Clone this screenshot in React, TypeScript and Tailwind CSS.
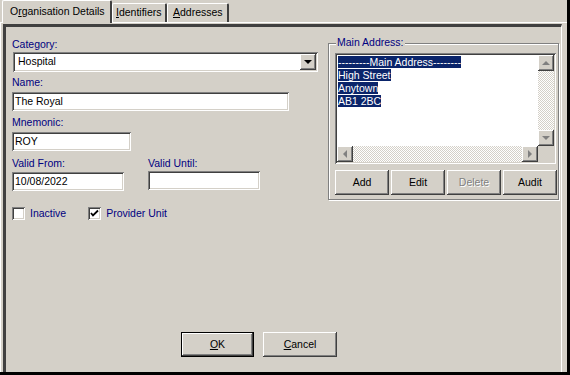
import React from "react";

const sunken =
  "bg-white shadow-[inset_1px_1px_0_#808080,inset_-1px_-1px_0_#ffffff,inset_2px_2px_0_#404040,inset_-2px_-2px_0_#d4d0c8]";
const raised =
  "bg-[#d4d0c8] shadow-[inset_-1px_-1px_0_#404040,inset_1px_1px_0_#ffffff,inset_-2px_-2px_0_#808080,inset_2px_2px_0_#d4d0c8]";
const track =
  "bg-[repeating-conic-gradient(#d4d0c8_0%_25%,#ffffff_0%_50%)] bg-[length:2px_2px]";

function Label({ children }: { children: React.ReactNode }) {
  return <div className="h-[13px] leading-[13px] text-[#000080]">{children}</div>;
}

function Arrow({ dir, color = "#808080" }: { dir: "up" | "down" | "left" | "right"; color?: string }) {
  const pts = {
    up: "4,6 8,2 12,6",
    down: "4,2 12,2 8,6",
    left: "6,4 2,8 6,12",
    right: "2,4 2,12 6,8",
  }[dir];
  const vertical = dir === "up" || dir === "down";
  return (
    <svg
      width={vertical ? 16 : 8}
      height={vertical ? 8 : 16}
      viewBox={vertical ? "0 0 16 8" : "0 0 8 16"}
      className="shrink-0"
    >
      <polygon points={pts} fill={color} />
    </svg>
  );
}

function ScrollButton({ dir }: { dir: "up" | "down" | "left" | "right" }) {
  return (
    <div className={`${raised} flex h-[16px] w-[16px] shrink-0 items-center justify-center`}>
      <Arrow dir={dir} />
    </div>
  );
}

function Checkbox({ checked, label }: { checked?: boolean; label: string }) {
  return (
    <div className="flex h-[13px] items-center">
      <div className={`${sunken} h-[13px] w-[13px] shrink-0`}>
        {checked && (
          <svg width="13" height="13" viewBox="0 0 13 13">
            <path d="M3 6 L5 8.5 L10 3.5" stroke="#000" strokeWidth="1.8" fill="none" />
          </svg>
        )}
      </div>
      <span className="ml-[5px] leading-[13px] text-[#000080]">{label}</span>
    </div>
  );
}

function Button({ children, disabled }: { children: React.ReactNode; disabled?: boolean }) {
  return (
    <div
      className={`${raised} flex h-[25px] w-[54px] items-center justify-center ${
        disabled ? "text-[#808080] [text-shadow:1px_1px_0_#ffffff]" : "text-black"
      }`}
    >
      {children}
    </div>
  );
}

export default function App() {
  return (
    <div className="box-border flex h-[375px] w-[570px] flex-col border-b-[3px] border-r-[3px] border-black bg-[#d4d0c8] font-['Liberation_Sans',Arial,sans-serif] text-[10.5px] text-black">
      {/* tabs */}
      <div className="flex h-[22px] shrink-0 items-end">
        <div className="relative z-10 -mb-[1px] ml-[2px] flex h-[23px] w-[110px] items-start rounded-t-[2px] border-l border-t border-r-2 border-l-white border-t-white border-r-[#404040] bg-[#d4d0c8] pl-[7px] pt-[4px]">
          <span className="leading-[13px]">
            O<span className="underline">r</span>ganisation Details
          </span>
        </div>
        <div className="flex h-[19px] w-[55px] items-center rounded-t-[2px] border-l border-t border-r-2 border-l-white border-t-white border-r-[#404040] pl-[3px]">
          <span>
            <span className="underline">I</span>dentifiers
          </span>
        </div>
        <div className="flex h-[19px] w-[62px] items-center rounded-t-[2px] border-l border-t border-r-2 border-l-white border-t-white border-r-[#404040] pl-[5px]">
          <span>
            <span className="underline">A</span>ddresses
          </span>
        </div>
      </div>

      {/* page */}
      <div className="flex flex-1 border-l border-t border-white">
        <div className="ml-[2px] mt-[1px] flex w-[559px] flex-col border-l-[3px] border-r border-t-[3px] border-l-[#404040] border-r-white border-t-[#404040]">
          <div className="flex items-start">
            {/* left column */}
            <div className="ml-[6px] flex w-[316px] flex-col">
              <div className="mt-[11px]">
                <Label>Category:</Label>
              </div>
              <div className={`${sunken} ml-[1px] mt-[1px] flex h-[20px] w-[305px] items-center justify-between p-[2px]`}>
                <span className="pl-[3px]">Hospital</span>
                <div className={`${raised} flex h-[16px] w-[16px] items-center justify-center`}>
                  <Arrow dir="down" color="#000000" />
                </div>
              </div>

              <div className="mt-[4px]">
                <Label>Name:</Label>
              </div>
              <div className={`${sunken} mt-[3px] flex h-[19px] w-[277px] items-center pl-[3px]`}>The Royal</div>

              <div className="mt-[5px]">
                <Label>Mnemonic:</Label>
              </div>
              <div className={`${sunken} mt-[3px] flex h-[19px] w-[119px] items-center pl-[3px]`}>ROY</div>

              <div className="mt-[6px] flex gap-[24px]">
                <div className="flex w-[112px] flex-col">
                  <Label>Valid From:</Label>
                  <div className={`${sunken} mt-[2px] flex h-[19px] w-[112px] items-center pl-[3px]`}>10/08/2022</div>
                </div>
                <div className="flex w-[112px] flex-col">
                  <Label>Valid Until:</Label>
                  <div className={`${sunken} mt-[1px] h-[19px] w-[112px]`} />
                </div>
              </div>

              <div className="mt-[16px] flex gap-[22px]">
                <Checkbox label="Inactive" />
                <Checkbox checked label="Provider Unit" />
              </div>
            </div>

            {/* main address group */}
            <div className="mt-[16px] flex h-[157px] w-[231px] flex-col border border-[#808080] shadow-[inset_1px_1px_0_#ffffff,1px_1px_0_#ffffff]">
              <div className="-mt-[8px] ml-[7px] w-fit bg-[#d4d0c8] px-[1px] leading-[13px] text-[#000080]">
                Main Address:
              </div>
              <div className={`${sunken} ml-[6px] mt-[4px] flex h-[111px] w-[221px] flex-col p-[2px]`}>
                <div className="flex h-[91px]">
                  <div className="flex flex-1 flex-col pl-[1px] pt-[1px] leading-[13px]">
                    {["---------Main Address--------", "High Street", "Anytown", "AB1 2BC"].map((line) => (
                      <div key={line} className="h-[13px]">
                        <span className="bg-[#0a246a] text-white">{line}</span>
                      </div>
                    ))}
                  </div>
                  <div className={`flex w-[16px] flex-col ${track}`}>
                    <ScrollButton dir="up" />
                    <div className="flex-1" />
                    <ScrollButton dir="down" />
                  </div>
                </div>
                <div className="flex h-[16px]">
                  <div className={`flex flex-1 ${track}`}>
                    <ScrollButton dir="left" />
                    <div className="flex-1" />
                    <ScrollButton dir="right" />
                  </div>
                  <div className="h-[16px] w-[16px] bg-[#d4d0c8]" />
                </div>
              </div>
              <div className="ml-[6px] mt-[6px] flex gap-[2px]">
                <Button>Add</Button>
                <Button>Edit</Button>
                <Button disabled>Delete</Button>
                <Button>Audit</Button>
              </div>
            </div>
          </div>

          {/* dialog buttons */}
          <div className="mb-[15px] mt-auto flex gap-[9px] pl-[175px]">
            <div className="h-[25px] w-[73px] border border-black">
              <div className={`${raised} flex h-full w-full items-center justify-center`}>
                <span>
                  <span className="underline">O</span>K
                </span>
              </div>
            </div>
            <div className={`${raised} flex h-[25px] w-[74px] items-center justify-center`}>
              <span>
                <span className="underline">C</span>ancel
              </span>
            </div>
          </div>
        </div>
      </div>
    </div>
  );
}
